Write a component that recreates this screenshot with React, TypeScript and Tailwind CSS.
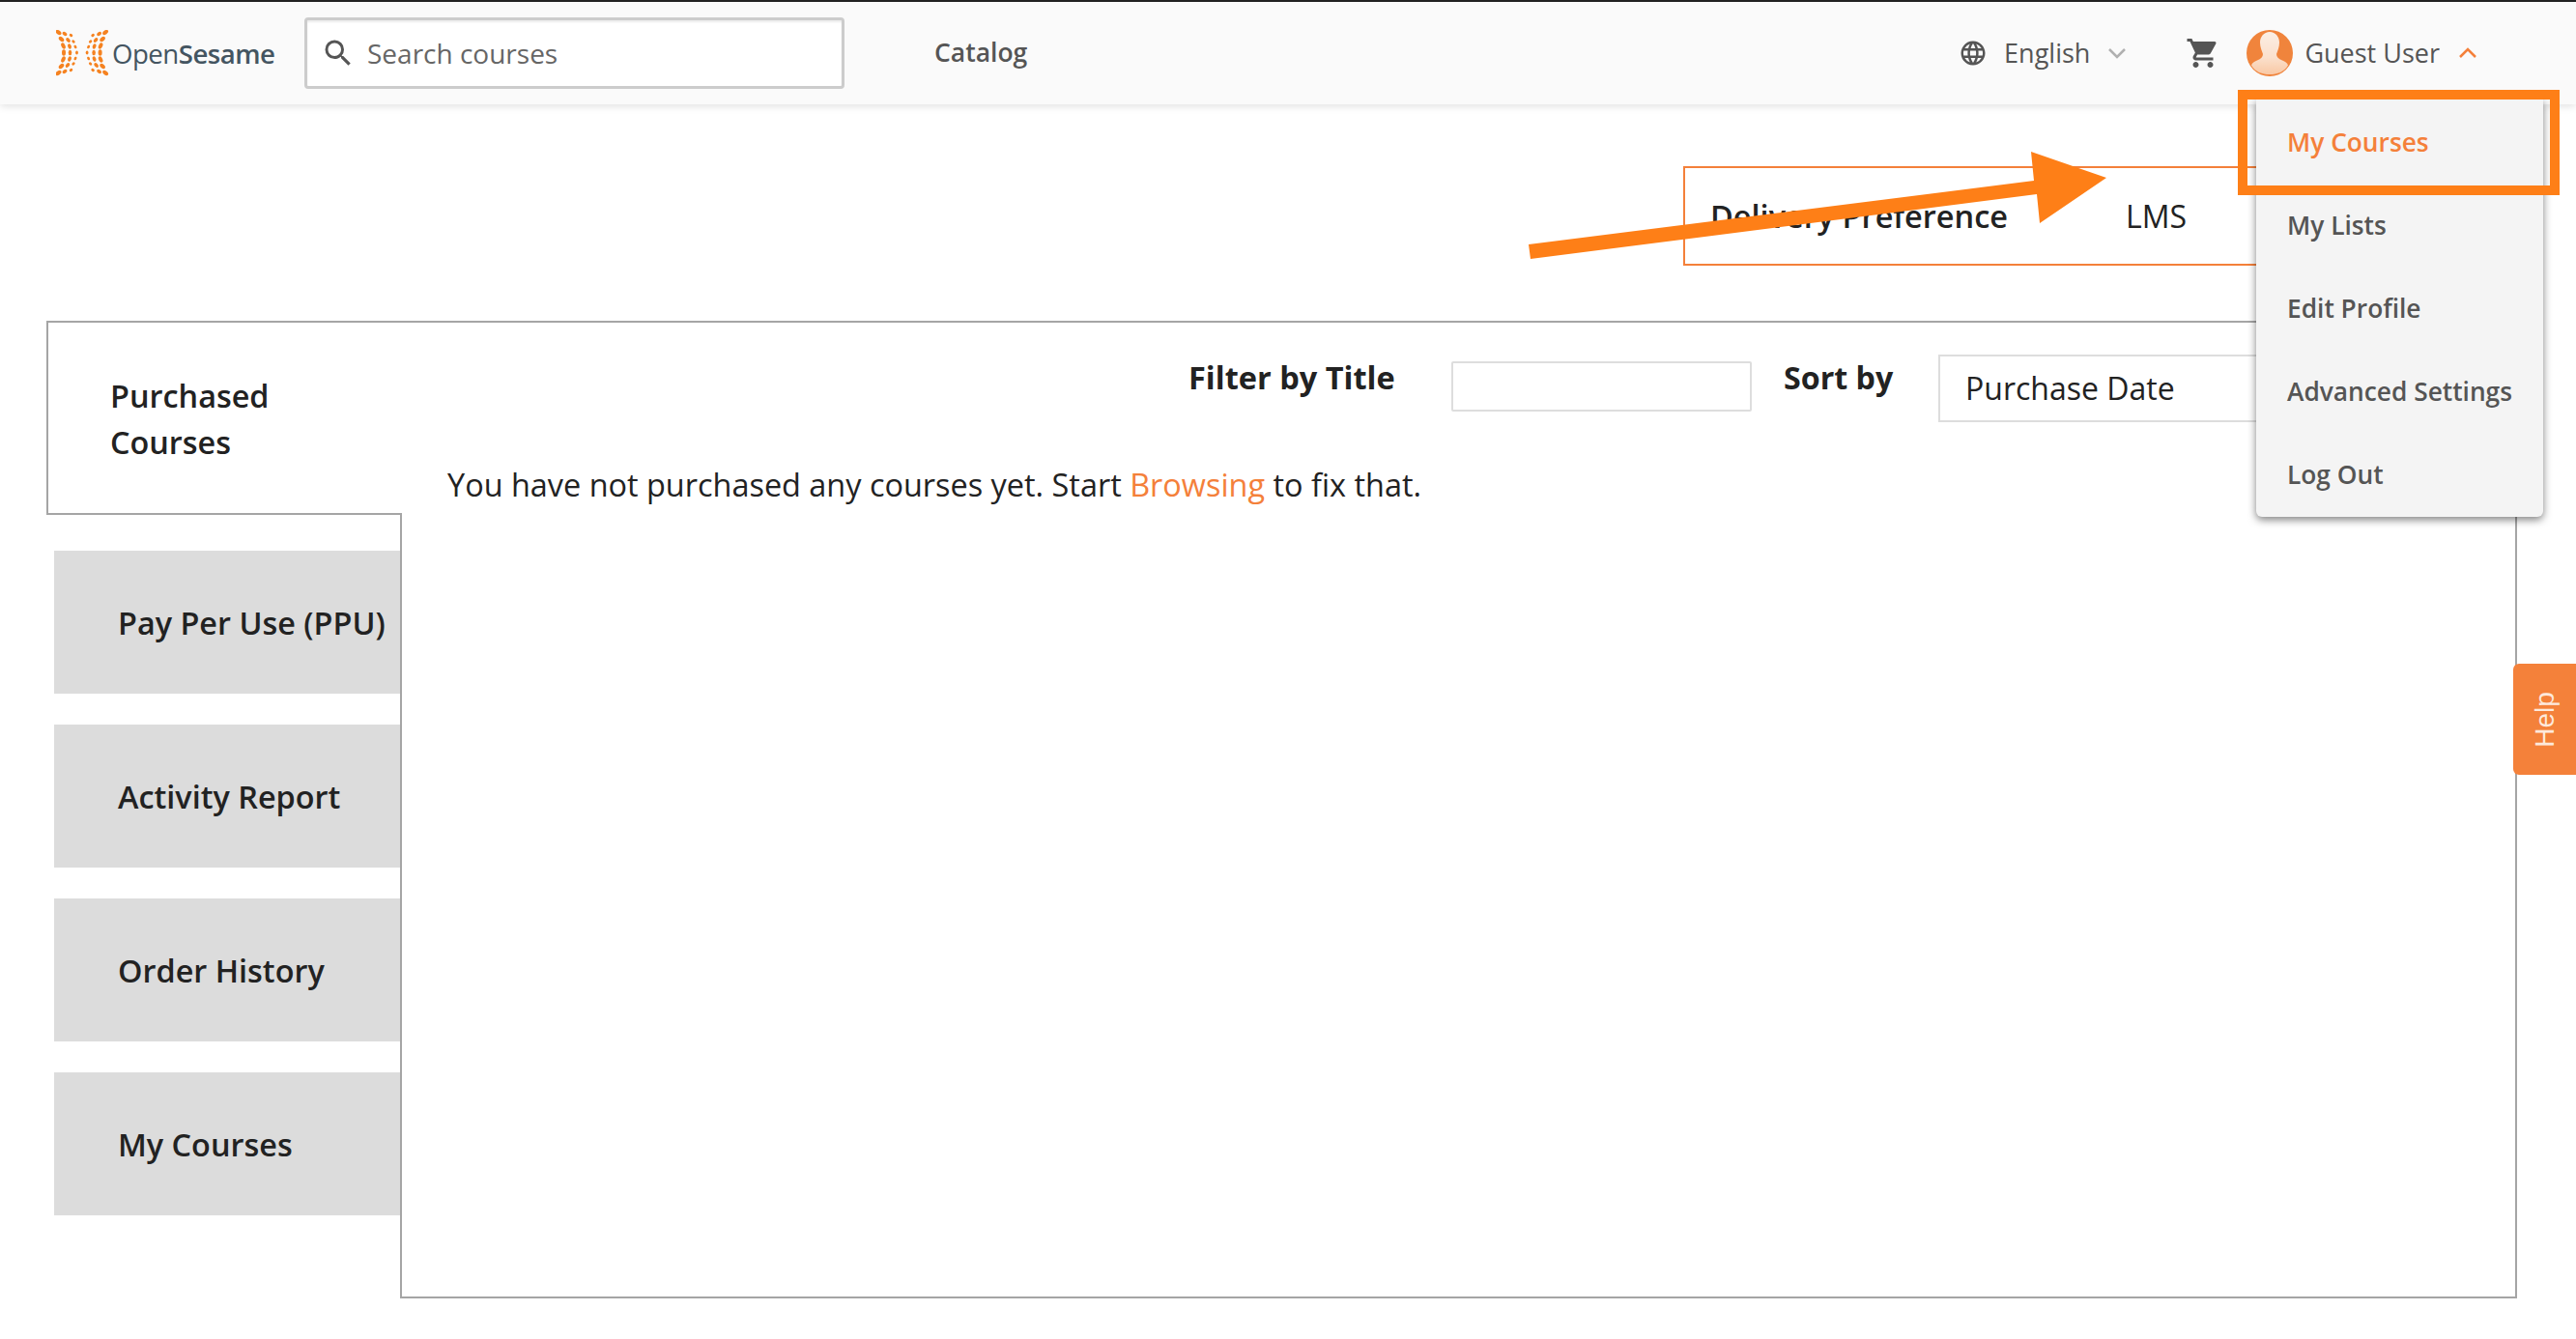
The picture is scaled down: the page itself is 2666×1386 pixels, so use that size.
import React from 'react';
import { MdSearch, MdShoppingCart, MdLanguage } from 'react-icons/md';

const sideTabs = ['Pay Per Use (PPU)', 'Activity Report', 'Order History', 'My Courses'];
const menuItems = ['My Lists', 'Edit Profile', 'Advanced Settings', 'Log Out'];

// dots of the logo mark: three curved columns per side, seven rows
const markRows = [
  { xs: [2.5, 9, 15.5], ys: [2.5, 4, 5.5], a: 35 },
  { xs: [5.5, 12.5, 18], ys: [9.5, 10.5, 12], a: 45 },
  { xs: [7.5, 14, 20], ys: [16.5, 17, 17.5], a: 65 },
  { xs: [8, 14.5, 21.5], ys: [23.5, 23.5, 23.5], a: 90 },
  { xs: [7.5, 14, 20], ys: [30.5, 30, 29.5], a: 115 },
  { xs: [5.5, 12, 18], ys: [37.5, 36.5, 35], a: 135 },
  { xs: [2.5, 9, 15.5], ys: [44.5, 43, 41.5], a: 145 },
];
const dotSize = [
  [3.3, 2],
  [2.7, 1.8],
  [1.9, 1.4],
];

const LogoMark = () => (
  <svg width="56" height="48" viewBox="0 0 56 48" className="shrink-0">
    {markRows.map((row, r) =>
      row.xs.map((x, c) => (
        <g key={`${r}-${c}`} fill="#f58220">
          <ellipse cx={x} cy={row.ys[c]} rx={dotSize[c][0]} ry={dotSize[c][1]} transform={`rotate(${row.a} ${x} ${row.ys[c]})`} />
          <ellipse cx={53.6 - x} cy={row.ys[c]} rx={dotSize[c][0]} ry={dotSize[c][1]} transform={`rotate(${-row.a} ${53.6 - x} ${row.ys[c]})`} />
        </g>
      ))
    )}
  </svg>
);

const Avatar = () => (
  <svg width="48" height="48" viewBox="0 0 48 48" className="shrink-0">
    <defs>
      <linearGradient id="skin" x1="0" y1="0" x2="0" y2="1">
        <stop offset="0" stopColor="#fbeee4" />
        <stop offset="0.6" stopColor="#fbe0cc" />
        <stop offset="1" stopColor="#f9c8a4" />
      </linearGradient>
    </defs>
    <circle cx="24" cy="24" r="24" fill="#f0843c" />
    <path
      d="M24 2c-6 0-10 5-10 11 0 5 2 9 3 12 0 3-2 5-6 6.500-3 1.200-5 2.500-6 5 4 7 11 9.500 19 9.500s15-2.500 19-9.500c-1-2.500-3-3.800-6-5-4-1.500-6-3.500-6-6.500 1-3 3-7 3-12 0-6-4-11-10-11z"
      fill="url(#skin)"
    />
  </svg>
);

const Chevron = ({ up, color }: { up?: boolean; color: string }) => (
  <svg width="18" height="12" viewBox="0 0 18 12" fill="none" stroke={color} strokeWidth="2.5" className="shrink-0">
    <polyline points={up ? '1,10 9,2 17,10' : '1,2 9,10 17,2'} />
  </svg>
);

export default function App() {
  return (
    <div className="relative h-[1386px] overflow-hidden bg-white font-['Open_Sans',sans-serif] text-[#222]">
      {/* Header */}
      <header className="flex h-[108px] items-center border-t-2 border-[#222] bg-[#fafafa] pl-[58px] pr-[103px] shadow-[0_2px_8px_rgba(0,0,0,0.12)]">
        <LogoMark />
        <span className="ml-[2px] mt-[2px] w-[199px] text-[27.6px] leading-none tracking-[-0.5px] text-[#445561]">
          Open<span className="font-semibold">Sesame</span>
        </span>
        <div className="flex h-[74px] w-[559px] items-center rounded-[4px] border-[3px] border-[#ccc] bg-white pl-[14px] shadow-[inset_0_2px_2px_rgba(0,0,0,0.08)]">
          <MdSearch className="text-[36px] text-[#555]" />
          <span className="ml-[12px] text-[28px] text-[#666]">Search courses</span>
        </div>
        <span className="ml-[93px] text-[26.5px] font-semibold text-[#555]">Catalog</span>
        <div className="ml-auto flex items-center">
          <MdLanguage className="text-[30px] text-[#555]" />
          <span className="ml-[17px] text-[27px] font-medium text-[#555]">English</span>
          <span className="ml-[19px]"><Chevron color="#b0b0b0" /></span>
          <MdShoppingCart className="ml-[62px] text-[36px] text-[#555]" />
          <span className="ml-[27px]"><Avatar /></span>
          <span className="ml-[12px] text-[27px] font-medium text-[#555]">Guest User</span>
          <span className="ml-[20px]"><Chevron up color="#f4803a" /></span>
        </div>
      </header>

      {/* Delivery preference */}
      <div className="ml-[1742px] mt-[64px] flex h-[103px] w-[800px] items-center border-2 border-[#f4803a] pl-[26px]">
        <span className="w-[430px] pt-[2px] text-[32.5px] font-semibold">Delivery Preference</span>
        <span className="text-[32px]">LMS</span>
      </div>

      {/* Main panel */}
      <div className="ml-[48px] mt-[57px] flex h-[1012px] w-[2557px]">
        <div className="relative z-10 w-[368px] shrink-0">
          <div className="flex h-[201px] flex-col justify-center border-y-2 border-l-2 border-[#a5a5a5] bg-white pl-[64px] text-[32.4px] font-semibold leading-[48px]">
            <span>Purchased</span>
            <span>Courses</span>
          </div>
          <div className="ml-[8px] mt-[37px] flex w-[358px] flex-col gap-[32px]">
            {sideTabs.map((t) => (
              <div key={t} className="flex h-[148px] items-center bg-[#dcdcdc] pl-[66px] text-[32.4px] font-semibold whitespace-nowrap">
                {t}
              </div>
            ))}
          </div>
        </div>
        <div className="-ml-[2px] flex-1 border-2 border-[#a5a5a5]">
          <div className="flex items-start pt-[33px]">
            <span className="ml-[814px] w-[272px] text-[32.5px] font-bold">Filter by Title</span>
            <div className="mt-[7px] h-[52px] w-[311px] rounded-[2px] border-2 border-[#ddd]" />
            <span className="ml-[33px] w-[160px] text-[32.2px] font-bold">Sort by</span>
            <div className="flex h-[70px] w-[540px] items-center border-2 border-[#ddd] pl-[26px] text-[32px]">Purchase Date</div>
          </div>
          <p className="ml-[47px] mt-[41px] text-[32.44px]">
            You have not purchased any courses yet. Start <span className="text-[#f4803a]">Browsing</span> to fix that.
          </p>
        </div>
      </div>

      {/* User menu */}
      <div className="absolute left-[2335px] top-[103px] z-20 flex h-[432px] w-[297px] flex-col rounded-b-[6px] bg-[#f4f4f4] pl-[32px] pt-[2px] text-[26.3px] font-semibold text-[#555] shadow-[0_3px_8px_rgba(0,0,0,0.5)]">
        <div className="flex h-[86px] shrink-0 items-center text-[#f4803a]">My Courses</div>
        {menuItems.map((m) => (
          <div key={m} className="flex h-[86px] shrink-0 items-center">{m}</div>
        ))}
      </div>

      {/* Annotation */}
      <div className="absolute left-[2316px] top-[93px] z-30 h-[109px] w-[333px] border-[10px] border-[#fe7f17]" />
      <svg className="absolute left-0 top-0 z-30" width="2666" height="400" viewBox="0 0 2666 400">
        <polygon points="1582,253 2105,187 2102,157 2180,184 2111,231 2108,201 1584,268" fill="#fe7f17" />
      </svg>

      {/* Help tab */}
      <div className="absolute left-[2601px] top-[687px] z-20 flex h-[115px] w-[65px] items-center justify-center rounded-l-[6px] bg-[#f4813a]">
        <span className="-rotate-90 font-['Liberation_Sans',sans-serif] text-[28px] text-[#fde9dc]">Help</span>
      </div>
    </div>
  );
}
